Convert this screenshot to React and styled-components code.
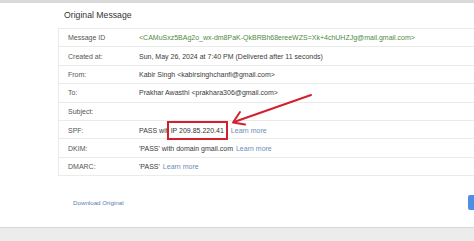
import React from "react";
import styled, { createGlobalStyle } from "styled-components";

const GlobalStyle = createGlobalStyle`
  html, body {
    margin: 0;
    padding: 0;
    background: #ffffff;
  }
  body {
    font-family: "Liberation Sans", Arial, sans-serif;
  }
`;

const rows = [
  { label: "Message ID", value: "<CAMuSxz5BAg2o_wx-dm8PaK-QkBRBh68ereeWZS=Xk+4chUHZJg@mail.gmail.com>", kind: "id" },
  { label: "Created at:", value: "Sun, May 26, 2024 at 7:40 PM (Delivered after 11 seconds)" },
  { label: "From:", value: "Kabir Singh <kabirsinghchanfi@gmail.com>" },
  { label: "To:", value: "Prakhar Awasthi <prakhara306@gmail.com>" },
  { label: "Subject:", value: "" },
  { label: "SPF:", kind: "spf" },
  { label: "DKIM:", value: "'PASS' with domain gmail.com", link: true },
  { label: "DMARC:", value: "'PASS'", link: true },
];

const App = () => {
  return (
    <Page>
      <GlobalStyle />
      <TopBar />
      <Main>
        <Title>Original Message</Title>
        <Table>
          {rows.map((row) => (
            <Row key={row.label}>
              <Label>{row.label}</Label>
              {row.kind === "spf" ? (
                <Value>
                  PASS wit
                  <Highlight>IP 209.85.220.41</Highlight>
                  <Link>Learn more</Link>
                </Value>
              ) : (
                <Value $green={row.kind === "id"}>
                  {row.value}
                  {row.link && <Link>Learn more</Link>}
                </Value>
              )}
            </Row>
          ))}
        </Table>
      </Main>
      <Footer>
        <Download>Download Original</Download>
        <BlueButton />
      </Footer>
      <BottomStrip />
      <Arrow width="474" height="241" viewBox="0 0 474 241">
        <line x1="311" y1="95" x2="234" y2="122" stroke="#d3202e" strokeWidth="2" strokeLinecap="round" />
        <polyline
          points="240,112 233,122.5 245,124.5"
          fill="none"
          stroke="#d3202e"
          strokeWidth="2"
          strokeLinecap="round"
          strokeLinejoin="round"
        />
      </Arrow>
    </Page>
  );
};

export default App;

const Page = styled.div`
  position: relative;
  width: 474px;
  height: 241px;
  overflow: hidden;
  display: flex;
  flex-direction: column;
`;

const TopBar = styled.div`
  height: 3px;
  background: #dadada;
  flex-shrink: 0;
`;

const Main = styled.div`
  padding: 6px 0 0 58px;
`;

const Title = styled.div`
  font-size: 8.7px;
  line-height: 12px;
  color: #333;
  padding-left: 6px;
  margin-bottom: 7px;
`;

const Table = styled.div`
  width: 440px;
  border: 1px solid #ebebeb;
  border-right: none;
`;

const Row = styled.div`
  display: grid;
  grid-template-columns: 80px 1fr;
  align-items: center;
  height: 17.4px;
  border-bottom: 1px solid #ebebeb;
  &:last-child {
    border-bottom: none;
  }
`;

const Label = styled.div`
  padding-left: 9px;
  font-size: 7px;
  color: #555;
  white-space: nowrap;
`;

const Value = styled.div`
  font-size: 7px;
  color: ${(p) => (p.$green ? "#4f8a45" : "#3a3a3a")};
  white-space: nowrap;
  display: flex;
  align-items: center;
`;

const Highlight = styled.span`
  border: 2px solid #d3202e;
  padding: 4px 2px 4px 2px;
  margin-left: -1px;
  color: #333;
`;

const Link = styled.span`
  color: #6d8db5;
  margin-left: 3px;
`;

const Footer = styled.div`
  margin-top: auto;
  height: 30px;
  display: flex;
  align-items: center;
  justify-content: space-between;
  padding-left: 73px;
  margin-bottom: 10px;
`;

const Download = styled.span`
  font-size: 6.2px;
  color: #5b7db3;
`;

const BlueButton = styled.div`
  width: 8px;
  height: 15px;
  margin-right: -2px;
  background: #4d8fe6;
  border-radius: 2px 0 0 2px;
`;

const BottomStrip = styled.div`
  height: 13px;
  border-top: 1px solid #d6d6d6;
  background: #ececec;
  flex-shrink: 0;
`;

const Arrow = styled.svg`
  position: absolute;
  left: 0;
  top: 0;
  pointer-events: none;
`;
